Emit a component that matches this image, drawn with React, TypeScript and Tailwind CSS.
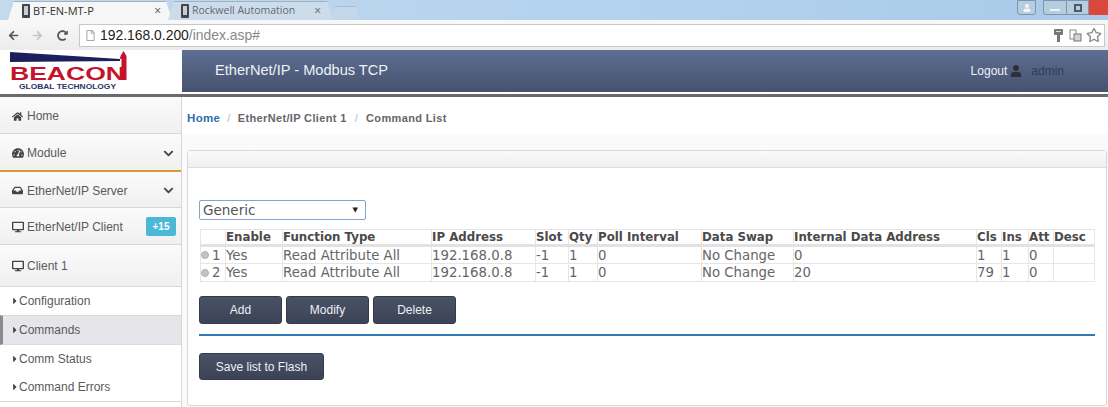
import React from "react";
import { FaHome, FaTachometerAlt, FaInbox, FaDesktop, FaUser, FaCaretRight, FaChevronDown, FaRegFile, FaRegStar, FaArrowLeft, FaArrowRight, FaRedoAlt } from "react-icons/fa";

const TabIcon = () => (
  <svg width="12" height="14" viewBox="0 0 12 14" className="shrink-0">
    <rect x="2" y="0" width="8" height="14" rx="1" fill="#3f4650" />
    <rect x="4" y="2" width="4" height="9" fill="#c9ccd0" />
  </svg>
);

const Logo = () => (
  <svg width="122" height="42" viewBox="0 0 122 42" className="block">
    <polygon points="0,2 110,9 110,11 0,12" fill="#1b1f5c" />
    <path d="M113.5 1 L116.5 6 L116.5 30 L111.5 30 L111.5 9 L110 9 L110.5 6 Z" fill="#c5132d" />
    <text x="0" y="30" textLength="115" lengthAdjust="spacingAndGlyphs" fontFamily="'Liberation Sans', sans-serif" fontWeight="700" fontSize="19" fill="#c5132d">BEACON</text>
    <text x="9" y="39" textLength="97" lengthAdjust="spacingAndGlyphs" fontFamily="'Liberation Sans', sans-serif" fontWeight="700" fontSize="7.5" fill="#2c3566">GLOBAL TECHNOLOGY</text>
  </svg>
);

const NavRow = ({ icon, label, chevron, badge, className }: { icon: React.ReactNode; label: string; chevron?: boolean; badge?: string; className: string }) => (
  <div className={`flex items-center pl-[12px] pr-[5px] bg-gradient-to-b from-[#fbfbfb] to-[#f0f0f0] text-[12px] text-[#5a5a5a] ${className}`}>
    <span className="w-[15px] flex justify-start text-[#444]">{icon}</span>
    <span>{label}</span>
    {chevron && <FaChevronDown className="ml-auto mr-[2px] text-[11px] text-[#444]" />}
    {badge && <span className="ml-auto w-[30px] h-[19px] rounded-[2px] bg-[#4cb8d8] text-white font-bold text-[10px] flex items-center justify-center">{badge}</span>}
  </div>
);

const SubRow = ({ label, active, className }: { label: string; active?: boolean; className: string }) => (
  <div className={`flex items-center text-[12px] text-[#5a5a5a] ${active ? "bg-[#e6e6ea] border-l-[3px] border-l-[#8b8b90] pl-[8px] border-y border-y-[#dcdcdc]" : "pl-[11px]"} ${className}`}>
    <FaCaretRight className="text-[10px] text-[#444] w-[8px] shrink-0" />
    <span>{label}</span>
  </div>
);

const widths = ["w-[25px]", "w-[57px]", "w-[149px]", "w-[104px]", "w-[33px]", "w-[29px]", "w-[104px]", "w-[92px]", "w-[183px]", "w-[25px]", "w-[27px]", "w-[25px]", "w-[41px]"];
const headers = ["", "Enable", "Function Type", "IP Address", "Slot", "Qty", "Poll Interval", "Data Swap", "Internal Data Address", "Cls", "Ins", "Att", "Desc"];
const rows = [
  ["1", "Yes", "Read Attribute All", "192.168.0.8", "-1", "1", "0", "No Change", "0", "1", "1", "0", ""],
  ["2", "Yes", "Read Attribute All", "192.168.0.8", "-1", "1", "0", "No Change", "20", "79", "1", "0", ""],
];

const Btn = ({ label, className }: { label: string; className: string }) => (
  <button className={`rounded-[3px] bg-gradient-to-b from-[#4a5266] to-[#3c4356] border border-[#343a4b] text-[#eef0f4] text-[12px] ${className}`}>{label}</button>
);

export default function App() {
  return (
    <div className="w-[1108px] h-[407px] overflow-hidden flex flex-col bg-white font-['Liberation_Sans',sans-serif]">
      {/* tab strip */}
      <div className="h-[20px] shrink-0 flex items-end bg-gradient-to-r from-[#c3d9ee] via-[#b4d3ee] to-[#a9cbe8] pl-[8px]">
        <div className="w-[164px] h-[19px] bg-[#f6f6f6] border-t border-[#9fb0c0] [clip-path:polygon(6px_0,calc(100%-6px)_0,100%_100%,0_100%)] flex items-center pl-[12px] pr-[11px] gap-[1px] text-[11px] text-[#333] whitespace-nowrap font-['Open_Sans',sans-serif]">
          <TabIcon />
          <span>BT-EN-MT-P</span>
          <span className="ml-auto text-[12px] text-[#555]">×</span>
        </div>
        <div className="ml-[-4px] w-[165px] h-[19px] bg-[#cddcea] border-t border-[#9fb0c0] [clip-path:polygon(6px_0,calc(100%-6px)_0,100%_100%,0_100%)] flex items-center pl-[11px] pr-[12px] gap-[1px] text-[10.5px] text-[#5f6a75] whitespace-nowrap font-['Open_Sans',sans-serif]">
          <TabIcon />
          <span>Rockwell Automation</span>
          <span className="ml-auto text-[12px] text-[#666]">×</span>
        </div>
        <div className="ml-[-2px] w-[28px] h-[13px] mb-[1px] bg-[#c5d8ea] border-t border-[#a9bccd] [clip-path:polygon(4px_0,calc(100%-4px)_0,100%_100%,0_100%)]" />
        <div className="ml-auto flex items-start self-start h-[15px]">
          <div className="w-[19px] h-[15px] border border-[#7d95aa] rounded-b-[3px] bg-[#b6cde0] flex items-center justify-center">
            <FaUser className="text-[8px] text-[#f3f6f8]" />
          </div>
          <div className="ml-[7px] w-[24px] h-[15px] border border-[#7d95aa] rounded-bl-[3px] bg-[#b6cde0] flex items-end justify-center pb-[3px]">
            <div className="w-[10px] h-[2px] bg-[#eef3f7]" />
          </div>
          <div className="w-[22px] h-[15px] border-y border-r border-[#7d95aa] bg-[#b6cde0] flex items-center justify-center">
            <div className="w-[8px] h-[8px] border-2 border-[#4d5a66]" />
          </div>
          <div className="w-[19px] h-[15px] bg-[#d9483b]" />
        </div>
      </div>

      {/* toolbar */}
      <div className="h-[30px] shrink-0 flex items-center bg-gradient-to-b from-[#f8f8f8] to-[#ececec] pl-[8px] pr-[3px]">
        <FaArrowLeft className="text-[11px] text-[#555]" />
        <FaArrowRight className="ml-[13px] text-[11px] text-[#c4c4c4]" />
        <FaRedoAlt className="ml-[14px] text-[11px] text-[#555]" />
        <div className="ml-[11px] flex-1 h-[23px] bg-white border border-[#c8c8c8] flex items-center pl-[5px] pr-[2px] text-[13.9px]">
          <FaRegFile className="text-[11px] text-[#a8a8a8]" />
          <span className="ml-[4px] text-[#222]">192.168.0.200</span>
          <span className="text-[#888]">/index.asp#</span>
          <svg width="9" height="13" viewBox="0 0 9 13" className="ml-auto">
            <rect x="0" y="0" width="9" height="6" rx="1" fill="#777" />
            <rect x="3" y="5" width="3" height="8" fill="#777" />
            <rect x="2" y="2" width="5" height="1" fill="#ddd" />
          </svg>
          <svg width="13" height="13" viewBox="0 0 13 13" className="ml-[6px]">
            <rect x="1" y="1" width="6" height="9" fill="none" stroke="#8a8a8a" />
            <rect x="5" y="5" width="7" height="7" fill="#d4d4d4" stroke="#777" />
          </svg>
          <FaRegStar className="ml-[4px] text-[16px] text-[#888]" />
        </div>
      </div>

      {/* app header */}
      <div className="h-[42px] shrink-0 flex bg-white">
        <div className="w-[182px] shrink-0 pl-[10px]"><Logo /></div>
        <div className="flex-1 flex items-center bg-gradient-to-b from-[#5e6f92] to-[#46526f] text-white">
          <span className="ml-[33px] text-[14.6px] text-[#eef1f6]">EtherNet/IP - Modbus TCP</span>
          <span className="ml-auto text-[12px] text-[#eef1f6]">Logout</span>
          <FaUser className="ml-[3px] text-[12px] text-[#2e3036]" />
          <span className="ml-[9px] mr-[44px] text-[12px] text-[#343c54]">admin</span>
        </div>
      </div>
      <div className="h-[2px] shrink-0 bg-white" />
      <div className="h-[3px] shrink-0 bg-[#6a6a6a]" />

      {/* body */}
      <div className="flex-1 flex min-h-0">
        <aside className="w-[182px] shrink-0 border-r border-[#d8d8d8] bg-white flex flex-col">
          <NavRow icon={<FaHome className="text-[11px]" />} label="Home" className="h-[37px] pt-[2px] border-b border-[#d8d8d8]" />
          <NavRow icon={<FaTachometerAlt className="text-[12px]" />} label="Module" chevron className="h-[38px] pt-[2px] border-b-2 border-[#d99a33]" />
          <NavRow icon={<FaInbox className="text-[11px]" />} label="EtherNet/IP Server" chevron className="h-[36px] pt-[2px] border-b border-[#d8d8d8]" />
          <NavRow icon={<FaDesktop className="text-[12px]" />} label="EtherNet/IP Client" badge="+15" className="h-[37px] pt-[1px] border-b border-[#d8d8d8]" />
          <NavRow icon={<FaDesktop className="text-[12px]" />} label="Client 1" className="h-[42px] border-b border-[#d8d8d8]" />
          <SubRow label="Configuration" className="h-[28px]" />
          <SubRow label="Commands" active className="h-[30px]" />
          <SubRow label="Comm Status" className="h-[28px]" />
          <SubRow label="Command Errors" className="h-[29px] border-b border-[#d8d8d8]" />
        </aside>

        <main className="flex-1 min-w-0 flex flex-col bg-[#fafafa]">
          <div className="h-[37px] shrink-0 bg-white flex items-center pl-[5px] pt-[6px] text-[11px] font-bold tracking-[0.35px] text-[#666]">
            <span className="text-[#2f6ea8] text-[11.5px]">Home</span>
            <span className="mx-[7px] font-normal text-[#bbb]">/</span>
            <span>EtherNet/IP Client 1</span>
            <span className="mx-[8px] font-normal text-[#bbb]">/</span>
            <span>Command List</span>
          </div>
          <div className="flex-1 pt-[16px] pl-[5px] pr-[1px] pb-[1px] flex flex-col min-h-0">
            <div className="flex-1 border border-[#d8d8d8] rounded-[3px] bg-white flex flex-col">
              <div className="h-[17px] shrink-0 bg-gradient-to-b from-[#fbfbfb] to-[#efefef] border-b border-[#dcdcdc]" />
              <div className="pl-[11px] pr-[11px] pt-[32px]">
                <div className="w-[167px] h-[20px] border border-[#7fa6d0] rounded-[2px] bg-white flex items-center pl-[3px] pr-[7px] text-[13.5px] text-[#555] font-['DejaVu_Sans',sans-serif]">
                  <span>Generic</span>
                  <span className="ml-auto text-[7px] text-[#222]">▼</span>
                </div>
                <table className="mt-[9px] ml-[1px] table-fixed border-collapse w-[894px] font-['DejaVu_Sans',sans-serif] text-[13.3px] text-[#666]">
                  <colgroup>
                    {widths.map((w, i) => <col key={i} className={w} />)}
                  </colgroup>
                  <thead>
                    <tr className="h-[16px]">
                      {headers.map((h, i) => (
                        <th key={i} className="border border-[#e6e6e6] border-b-[3px] border-b-[#e2e2e2] p-0 text-left text-[11.8px] font-bold text-[#4a4a4a] whitespace-nowrap leading-[14px]">{h}</th>
                      ))}
                    </tr>
                  </thead>
                  <tbody>
                    {rows.map((r) => (
                      <tr key={r[0]} className="h-[18px]">
                        {r.map((c, i) => (
                          <td key={i} className="border border-[#e6e6e6] p-0 whitespace-nowrap leading-[15px] overflow-hidden">
                            {i === 0 ? (
                              <span className="flex items-center gap-[3px]">
                                <span className="w-[8px] h-[8px] rounded-full bg-[#c4c4c4] border border-[#b0b0b0]" />
                                {c}
                              </span>
                            ) : c}
                          </td>
                        ))}
                      </tr>
                    ))}
                  </tbody>
                </table>
                <div className="mt-[14px] flex gap-[4px]">
                  <Btn label="Add" className="w-[83px] h-[28px]" />
                  <Btn label="Modify" className="w-[83px] h-[28px]" />
                  <Btn label="Delete" className="w-[83px] h-[28px]" />
                </div>
                <div className="mt-[10px] h-[2px] w-[896px] bg-[#2f79b5]" />
                <Btn label="Save list to Flash" className="mt-[17px] w-[125px] h-[27px]" />
              </div>
            </div>
          </div>
        </main>
      </div>
    </div>
  );
}
